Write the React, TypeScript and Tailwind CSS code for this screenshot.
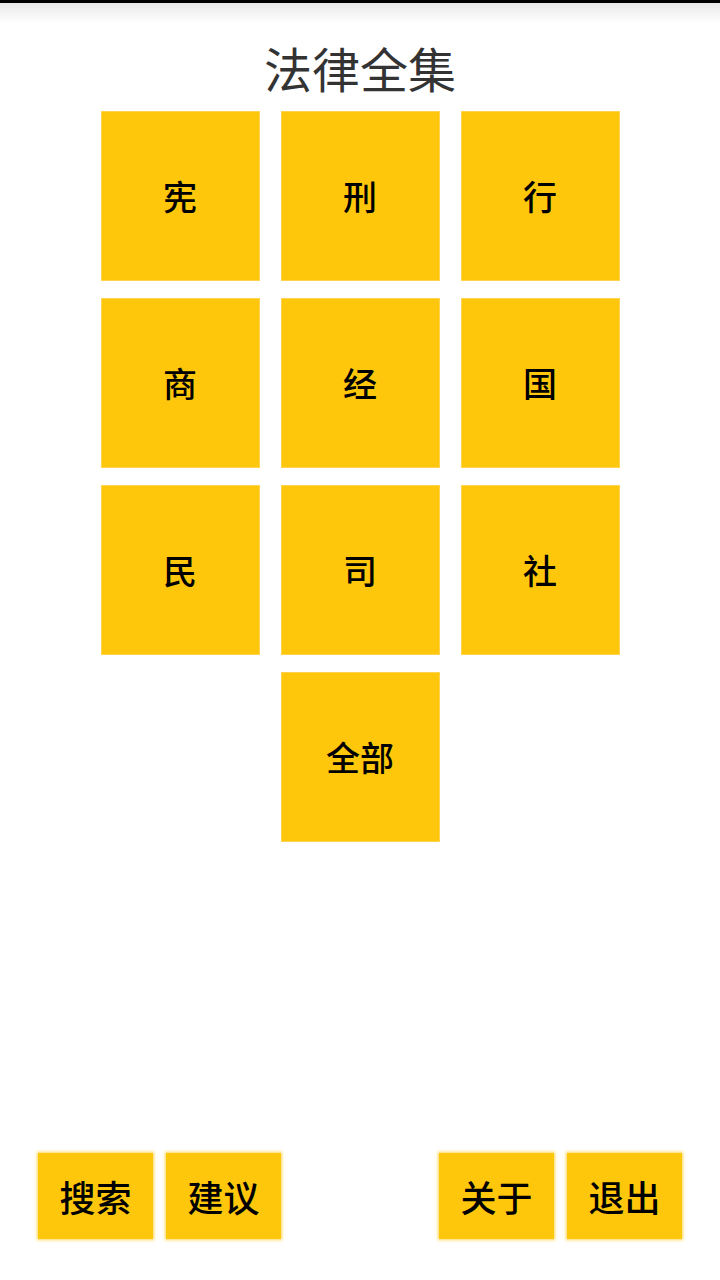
import React from 'react'

const tiles = ['宪', '刑', '行', '商', '经', '国', '民', '司', '社']

const Tile: React.FC<{ label: string }> = ({ label }) => (
  <div className="w-[159px] h-[170px] bg-[#ffc70b] border border-[#ffd34f] flex items-center justify-center text-[34px] font-medium text-black leading-none">
    {label}
  </div>
)

const BottomButton: React.FC<{ label: string }> = ({ label }) => (
  <div className="w-[115px] h-[86px] bg-[#ffc70b] shadow-[0_0_3px_1px_rgba(255,199,11,0.7)] flex items-center justify-center text-[36px] font-medium text-black leading-none">
    {label}
  </div>
)

export default function App() {
  return (
    <div
      className="w-[720px] h-[1280px] bg-white flex flex-col"
      style={{ fontFamily: '"Noto Sans CJK SC", "Noto Sans", sans-serif' }}
    >
      {/* status bar shadow */}
      <div className="h-[3px] bg-black" />
      <div className="h-[20px] bg-gradient-to-b from-[#e8e8e8] to-white" />

      <div className="h-[88px] pt-[20px] text-center text-[48px] leading-[48px] text-[#333333]">
        法律全集
      </div>

      <div className="grid grid-cols-[159px_159px_159px] gap-x-[21px] gap-y-[17px] justify-center">
        {tiles.map((t) => (
          <Tile key={t} label={t} />
        ))}
        <div />
        <Tile label="全部" />
      </div>

      {/* bottom actions */}
      <div className="mt-auto flex justify-between px-[38px] pb-[41px]">
        <div className="flex gap-[13px]">
          <BottomButton label="搜索" />
          <BottomButton label="建议" />
        </div>
        <div className="flex gap-[13px]">
          <BottomButton label="关于" />
          <BottomButton label="退出" />
        </div>
      </div>
    </div>
  )
}
